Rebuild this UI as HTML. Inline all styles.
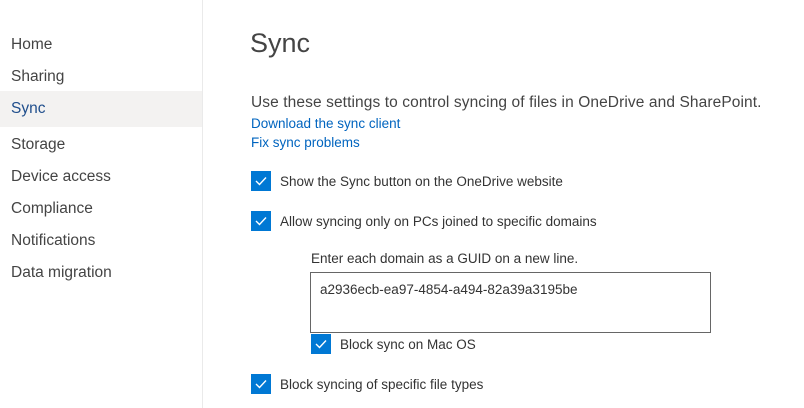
<!DOCTYPE html>
<html><head><style>
body{margin:0;width:804px;height:408px;overflow:hidden;background:#fff;font-family:"Segoe UI","Liberation Sans",sans-serif;color:#333;position:relative}
.side{position:absolute;left:0;top:0;width:202px;height:408px;border-right:1px solid #eaeaea}
.nav{position:absolute;left:11px;font-size:15.5px;color:#444}
.sel{position:absolute;left:0;top:91px;width:202px;height:36px;background:#f3f2f1}
.t{position:absolute;white-space:nowrap}
.cb{position:absolute;width:20px;height:20px;background:#0078d4}
.cb svg{position:absolute;left:4px;top:5px}
a{color:#0064bf;text-decoration:none}
</style></head><body>
<div class="side"></div>
<div class="sel"></div>
<div class="nav" style="top:36px">Home</div>
<div class="nav" style="top:68px">Sharing</div>
<div class="nav" style="top:100px;color:#1f4e8c">Sync</div>
<div class="nav" style="top:136px">Storage</div>
<div class="nav" style="top:168px">Device access</div>
<div class="nav" style="top:200px">Compliance</div>
<div class="nav" style="top:232px">Notifications</div>
<div class="nav" style="top:264px">Data migration</div>

<div class="t" style="left:250px;top:28px;font-size:27px;font-weight:300;color:#444">Sync</div>
<div class="t" style="left:251px;top:94px;font-size:15.5px;color:#444;letter-spacing:0.1px">Use these settings to control syncing of files in OneDrive and SharePoint.</div>
<div class="t" style="left:251px;top:116px;font-size:13.5px"><a>Download the sync client</a></div>
<div class="t" style="left:251px;top:135px;font-size:13.5px"><a>Fix sync problems</a></div>

<div class="cb" style="left:251px;top:171px"><svg width="12" height="10"><path d="M1 5l3.5 3.5L11 1.5" stroke="#fff" stroke-width="1.4" fill="none"/></svg></div>
<div class="t" style="left:280px;top:174px;font-size:13.5px;color:#333">Show the Sync button on the OneDrive website</div>
<div class="cb" style="left:251px;top:211px"><svg width="12" height="10"><path d="M1 5l3.5 3.5L11 1.5" stroke="#fff" stroke-width="1.4" fill="none"/></svg></div>
<div class="t" style="left:280px;top:214px;font-size:13.5px;color:#333">Allow syncing only on PCs joined to specific domains</div>

<div class="t" style="left:311px;top:251px;font-size:13.5px;color:#333">Enter each domain as a GUID on a new line.</div>
<div style="position:absolute;left:310px;top:272px;width:399px;height:59px;border:1px solid #666"></div>
<div class="t" style="left:320px;top:282px;font-size:13.5px;color:#333">a2936ecb-ea97-4854-a494-82a39a3195be</div>
<div class="cb" style="left:311px;top:334px"><svg width="12" height="10"><path d="M1 5l3.5 3.5L11 1.5" stroke="#fff" stroke-width="1.4" fill="none"/></svg></div>
<div class="t" style="left:340px;top:337px;font-size:13.5px;color:#333">Block sync on Mac OS</div>

<div class="cb" style="left:251px;top:374px"><svg width="12" height="10"><path d="M1 5l3.5 3.5L11 1.5" stroke="#fff" stroke-width="1.4" fill="none"/></svg></div>
<div class="t" style="left:280px;top:377px;font-size:13.5px;color:#333">Block syncing of specific file types</div>
</body></html>
